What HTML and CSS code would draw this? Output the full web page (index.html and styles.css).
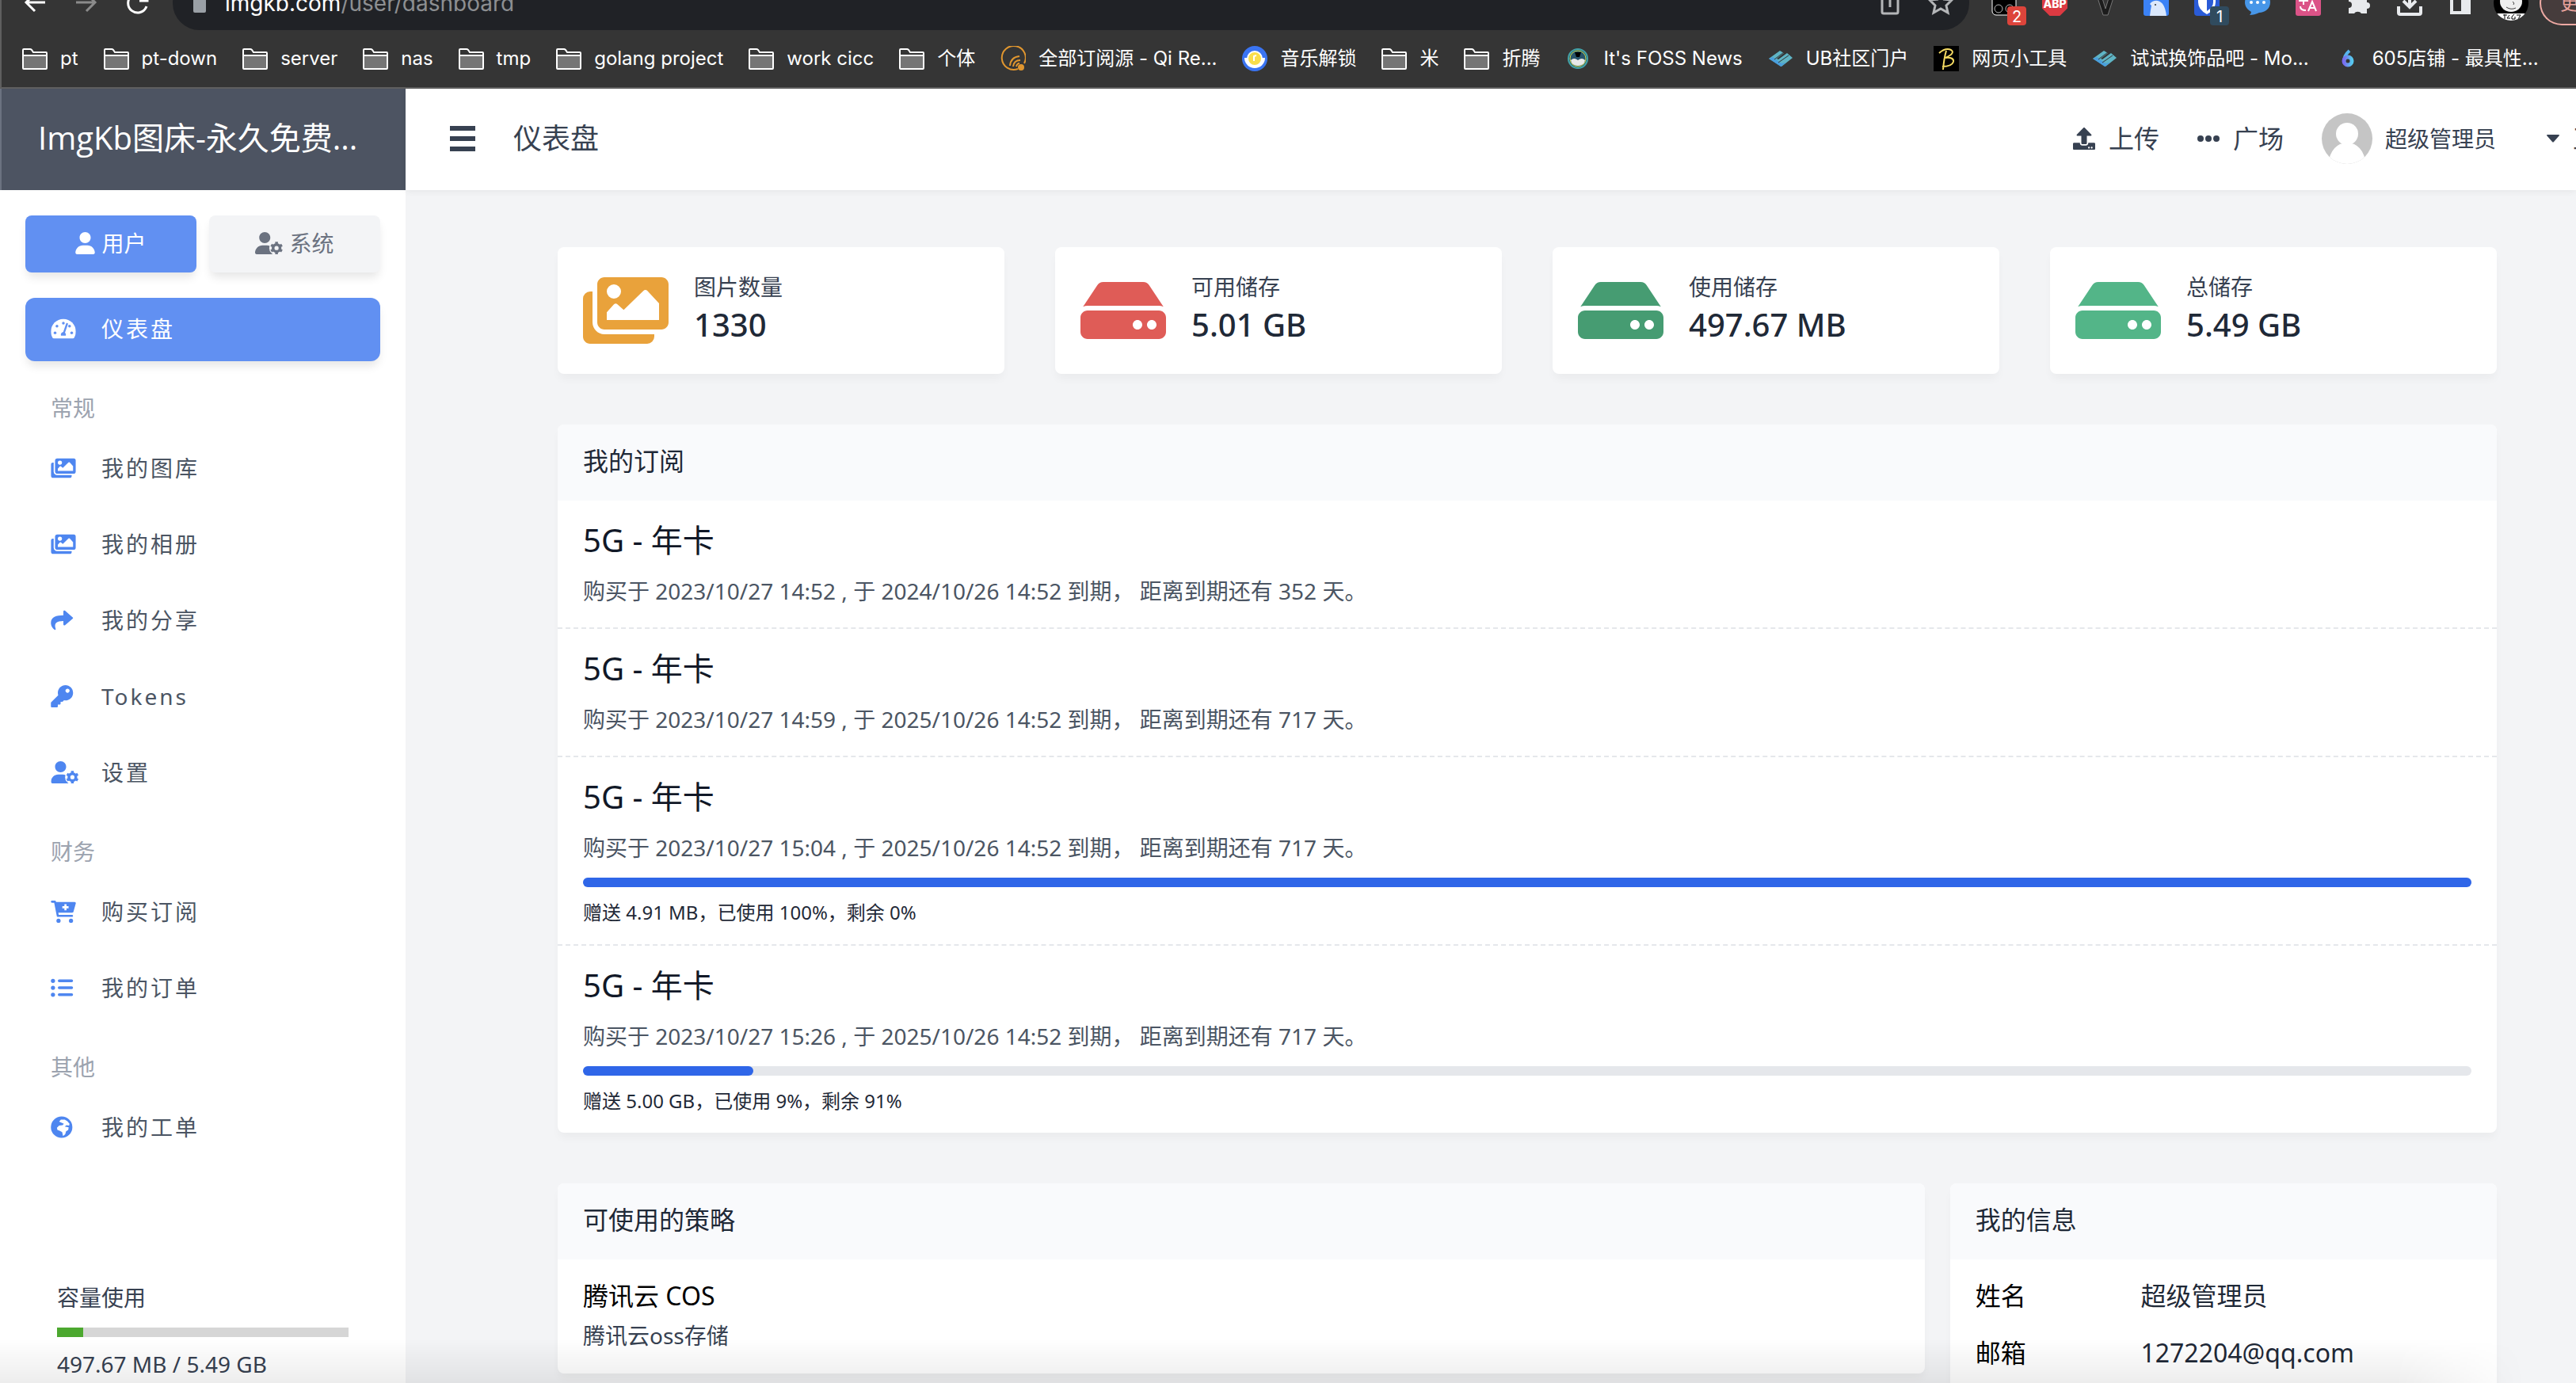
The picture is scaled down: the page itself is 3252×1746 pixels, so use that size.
FILE: index.html
```html
<!DOCTYPE html>
<html lang="zh-CN">
<head>
  <meta charset="UTF-8">
  <title>仪表盘 - ImgKb图床</title>
  <link rel="stylesheet" href="styles.css">
</head>
<body>

<!-- icons used more than once -->
<svg class="sprite" aria-hidden="true">
  <symbol id="folder" viewBox="0 0 32 32">
    <path d="M2 12h28v16H2z" fill="#757575"/>
    <path d="M1 28V5q0-1 1-1h8q1 0 2 1l2 3h16q1 0 1 1v19q0 1-1 1H2q-1 0-1-1zM1 12h30" fill="none" stroke="#fff" stroke-width="2"/>
  </symbol>
  <symbol id="layers" viewBox="0 0 32 32">
    <path d="M1 16L15 6l5 3-9 7 2 1L24 9l7 6-14 11z" fill="#5fb4c4"/>
    <path d="M1 16l5-2 4 3 3 2 4 3 6-1-7 5z" fill="#4a9fdc"/>
    <path d="M8 17L20 8M13 21l13-9" stroke="#353535" stroke-width="1"/>
  </symbol>
  <symbol id="images" viewBox="0 0 576 512">
    <path fill-rule="evenodd" d="M144 32h384c26.5 0 48 21.5 48 48v256c0 26.5-21.5 48-48 48H144c-26.5 0-48-21.5-48-48V80c0-26.5 21.5-48 48-48zM208 80a48 48 0 1 0 0 96 48 48 0 1 0 0-96zM160 268v52h352V208l-78-84q-14-14-28 0L274 252l-42-38q-12-10-24 0z"/>
    <path d="M64 128H48a48 48 0 0 0-48 48v256c0 26.500 21.500 48 48 48h384a48 48 0 0 0 48-48v-16H144c-44 0-80-36-80-80z"/>
  </symbol>
  <symbol id="hdd" viewBox="0 0 576 512">
    <path d="M576 304v96c0 26.510-21.490 48-48 48H48c-26.510 0-48-21.490-48-48v-96c0-26.510 21.490-48 48-48h480c26.510 0 48 21.490 48 48zm-48-80a79.557 79.557 0 0 1 30.777 6.165L462.250 85.374A48.003 48.003 0 0 0 422.311 64H153.689a48 48 0 0 0-39.938 21.374L17.223 230.165A79.557 79.557 0 0 1 48 224h480zm-48 96c-17.673 0-32 14.327-32 32s14.327 32 32 32 32-14.327 32-32-14.327-32-32-32zm-96 0c-17.673 0-32 14.327-32 32s14.327 32 32 32 32-14.327 32-32-14.327-32-32-32z"/>
  </symbol>
  <symbol id="user" viewBox="0 0 448 512">
    <path d="M224 256c70.700 0 128-57.310 128-128S294.700 0 224 0 96 57.310 96 128s57.300 128 128 128zM274.700 304H173.300C77.610 304 0 381.600 0 477.300 0 496.440 15.520 512 34.660 512h378.700C432.500 512 448 496.500 448 477.300 448 381.600 370.400 304 274.700 304z"/>
  </symbol>
  <symbol id="user-gear" viewBox="0 0 640 512">
    <mask id="gear-cut"><path d="M0 0h640v512H0z" fill="#fff"/><circle cx="496" cy="368" r="168" fill="#000"/></mask>
    <path mask="url(#gear-cut)" d="M224 256c70.700 0 128-57.310 128-128S294.700 0 224 0 96 57.310 96 128s57.300 128 128 128zM274.700 304H173.300C77.610 304 0 381.600 0 477.300 0 496.440 15.520 512 34.660 512h378.700C432.500 512 448 496.500 448 477.300 448 381.600 370.400 304 274.700 304z"/>
    <g fill="none" stroke="currentColor">
      <circle cx="496" cy="368" r="80" stroke-width="64"/>
      <path stroke-width="64" d="M496 268v-44M496 468v44M583 318l38-22M409 418l-38 22M583 418l38 22M409 318l-38-22"/>
    </g>
  </symbol>
</svg>

<div class="browser">
  <div class="toolbar">
    <svg class="nav-icon" viewBox="0 0 32 32"><path d="M29 15H5M16 4L5 15l11 11" stroke="#fff"/></svg>
    <svg class="nav-icon" viewBox="0 0 32 32"><path d="M3 15h24M16 4l11 11-11 11" stroke="#8b8b8b"/></svg>
    <svg class="nav-icon" viewBox="0 0 32 32"><path d="M27 20a12 12 0 1 1 0-8M28 3v10H18" stroke="#fff"/></svg>
    <div class="address">
      <svg class="lock" viewBox="0 0 16 24"><path d="M0 8h16v14q0 2-2 2H2q-2 0-2-2z" fill="#9aa0a6"/><path d="M4 9V5a4 4 0 0 1 8 0v4" fill="none" stroke="#9aa0a6" stroke-width="2"/></svg>
      <span class="url">imgkb.com<span>/user/dashboard</span></span>
      <svg class="address-icon" viewBox="0 0 32 32"><path d="M11 9H8q-2 0-2 2v16q0 2 2 2h16q2 0 2-2V11q0-2-2-2h-3M16 21V3M11 7l5-5 5 5"/></svg>
      <svg class="address-icon" viewBox="0 0 32 32"><path d="M16 2l4 9 10 1-7 7 2 9-9-5-9 5 2-9-7-7 10-1z"/></svg>
    </div>
    <div class="extensions">
      <div class="ext">
        <svg viewBox="0 0 32 32"><rect x="1" y="1" width="30" height="30" rx="5" fill="#000" stroke="#fff"/><circle cx="9" cy="23" r="5" fill="none" stroke="#bbb"/><circle cx="23" cy="23" r="5" fill="none" stroke="#bbb"/></svg>
        <span class="badge">2</span>
      </div>
      <div class="ext abp">ABP</div>
      <div class="ext"><svg viewBox="0 0 32 32"><path d="M3 0h6l7 23L23 0h6L19 31h-6z" fill="#1c1c1c" stroke="#777"/></svg></div>
      <div class="ext"><svg viewBox="0 0 32 32"><rect width="32" height="32" rx="3" fill="#3b82f6"/><path d="M8 32q1-8 2-13l-2-2q4-5 10-4 9 2 11 19z" fill="#dbe8fc"/><circle cx="15" cy="18" r="1" fill="#333"/></svg></div>
      <div class="ext">
        <svg viewBox="0 0 32 32"><rect width="32" height="32" rx="4" fill="#2a5bd7"/><path d="M5 3h22v12q0 9-11 15Q5 24 5 15z" fill="#fff"/><path d="M16 6h8v9q0 6-8 11z" fill="#2a5bd7"/></svg>
        <span class="badge navy">1</span>
      </div>
      <div class="ext"><svg viewBox="0 0 32 32"><path d="M16 1c9 0 16 6 16 14s-7 13-14 13c-4 2-8 3-12 3q2-2 2-4C3 24 0 20 0 15 0 7 7 1 16 1z" fill="#4796e8"/><g fill="#fff"><circle cx="8" cy="15" r="2"/><circle cx="16" cy="15" r="2"/><circle cx="24" cy="15" r="2"/></g></svg></div>
      <div class="ext"><svg viewBox="0 0 32 32"><rect width="32" height="32" rx="3" fill="#db5387"/><path d="M16 26l5-12 5 12M18 22h6M6 20q0 5 7 5M10 4v14M5 7h10v6H5z" fill="none" stroke="#fff" stroke-width="2"/></svg></div>
      <div class="ext"><svg viewBox="0 0 32 32"><path d="M3 8h8a4 4 0 1 1 8 0h7v7a4 4 0 1 1 0 8v6h-7a5 4 0 0 0-9 0H3v-7a4 4 0 0 0 0-8z" fill="#e8eaed"/></svg></div>
      <div class="ext"><svg viewBox="0 0 32 32"><path d="M2 20v8q0 2 2 2h24q2 0 2-2v-8M16 2v18M8 13l8 8 8-8" fill="none" stroke="#e8eaed" stroke-width="4"/></svg></div>
      <div class="ext"><svg viewBox="0 0 32 32"><path d="M3 3h26v27H3z" fill="#e8eaed"/><path d="M7 7h10v19H7z" fill="#353535"/></svg></div>
    </div>
    <svg class="profile" viewBox="0 0 44 44"><clipPath id="face"><circle cx="22" cy="22" r="22"/></clipPath><g clip-path="url(#face)"><path d="M0 0h44v44H0z" fill="#000"/><ellipse cx="22" cy="20" rx="14" ry="13" fill="#eee"/><path d="M16 27q6 4 12 1M24 20q3 2 1 4" fill="none" stroke="#444" stroke-width="1"/><path d="M0 35h44v9H0z" fill="#fff"/><path d="M12 37h5M14 36v6M20 37l-3 4h4M26 36l-3 3v3h4v-3M29 37h5l-3 5" fill="none" stroke="#000"/></g></svg>
    <button class="update">更新</button>
  </div>
  <nav class="bookmarks">
    <a href="#"><svg><use href="#folder"/></svg>pt</a>
    <a href="#"><svg><use href="#folder"/></svg>pt-down</a>
    <a href="#"><svg><use href="#folder"/></svg>server</a>
    <a href="#"><svg><use href="#folder"/></svg>nas</a>
    <a href="#"><svg><use href="#folder"/></svg>tmp</a>
    <a href="#"><svg><use href="#folder"/></svg>golang project</a>
    <a href="#"><svg><use href="#folder"/></svg>work cicc</a>
    <a href="#"><svg><use href="#folder"/></svg>个体</a>
    <a href="#"><svg viewBox="0 0 32 32"><g fill="none" stroke="#e0962f" stroke-width="2"><path d="M22 29a15 15 0 1 1 8-7"/><path d="M12 25q1-11 12-12M16 26q1-8 9-8M20 26q1-4 4-4"/></g><circle cx="26" cy="27" r="4" fill="#e0962f"/></svg>全部订阅源 - Qi Re...</a>
    <a href="#"><svg viewBox="0 0 32 32"><circle cx="16" cy="16" r="16" fill="#3a74f2"/><path d="M3 15h26a13 13 0 0 1-26 0z" fill="#fff"/><circle cx="16" cy="16" r="9" fill="#f9de4b" stroke="#fff" stroke-width="2"/><path d="M15 19v-6l3-1" fill="none" stroke="#fff" stroke-width="2"/></svg>音乐解锁</a>
    <a href="#"><svg><use href="#folder"/></svg>米</a>
    <a href="#"><svg><use href="#folder"/></svg>折腾</a>
    <a href="#"><svg viewBox="0 0 32 32"><circle cx="16" cy="16" r="12" fill="#28546b" stroke="#43a3a8" stroke-width="2"/><circle cx="16" cy="16" r="10" fill="none" stroke="#c8d94a" stroke-width="1"/><path d="M12 8h8l-2 6h-4z" fill="#000"/><path d="M7 18q4-4 9 0 5-4 9 0-1 7-9 7t-9-7z" fill="#e8e8e8"/></svg>It's FOSS News</a>
    <a href="#"><svg><use href="#layers"/></svg>UB社区门户</a>
    <a href="#"><svg viewBox="0 0 32 32"><path d="M0 0h32v32H0z" fill="#000"/><path d="M7 9q8-7 15-4 6 4-7 10 11-1 10 5-2 6-14 6M16 6q-3 10-4 24" fill="none" stroke="#f6dc63" stroke-width="2"/></svg>网页小工具</a>
    <a href="#"><svg><use href="#layers"/></svg>试试换饰品吧 - Mo...</a>
    <a href="#"><svg viewBox="0 0 32 32"><defs><linearGradient id="six"><stop offset="0" stop-color="#7a6bf0"/><stop offset="1" stop-color="#56c8ee"/></linearGradient></defs><path d="M19 6q-7 6-7 14" fill="none" stroke="#56b4ee" stroke-width="4"/><circle cx="17" cy="19" r="5" fill="none" stroke="url(#six)" stroke-width="5"/></svg>605店铺 - 最具性...</a>
  </nav>
</div>

<div class="app">
  <aside class="sidebar">
    <div class="brand">ImgKb图床-永久免费...</div>
    <div class="tabs">
      <button class="tab active"><svg class="icon-user"><use href="#user"/></svg>用户</button>
      <button class="tab"><svg class="icon-gear"><use href="#user-gear"/></svg>系统</button>
    </div>
    <nav class="menu">
      <a class="active" href="#">
        <svg viewBox="0 0 576 512"><mask id="dial"><path fill="#fff" d="M0 0h576v512H0z"/><g fill="#000"><circle cx="96" cy="352" r="32"/><circle cx="140" cy="196" r="32"/><circle cx="288" cy="128" r="32"/><circle cx="430" cy="196" r="32"/><circle cx="480" cy="352" r="32"/><path d="M372 146l-66 190" stroke="#000" stroke-width="44" stroke-linecap="round"/><path d="M232 416q-16-70 56-88 72 18 56 88z"/></g></mask><path mask="url(#dial)" d="M288 32C129 32 0 161 0 320c0 53 14 102 39 145 6 10 16 15 27 15h444c11 0 21-5 27-15 25-43 39-92 39-145C576 161 447 32 288 32z"/></svg>
        仪表盘
      </a>
      <h3>常规</h3>
      <a href="#"><svg viewBox="0 0 576 512"><use href="#images"/></svg>我的图库</a>
      <a href="#"><svg viewBox="0 0 576 512"><use href="#images"/></svg>我的相册</a>
      <a href="#"><svg viewBox="0 0 576 512"><path d="M503.700 189.800l-176-151.100C312.300 25.400 288 36.100 288 56v87.900C127.400 146.200 0 179.700 0 322.300c0 61.400 39.600 122.300 83.300 154.100 13.700 9.900 33.100-2.500 28.100-18.600C66.100 312.800 132.900 274.300 288 272v80c0 20 24.400 30.500 39.700 17.300l176-152c11.100-9.400 11.100-20 0-27.500z"/></svg>我的分享</a>
      <a href="#"><svg viewBox="0 0 576 512"><path d="M512 176.001C512 273.203 433.202 352 336 352c-11.220 0-22.190-1.062-32.827-3.069l-24.012 27.014A23.999 23.999 0 0 1 261.223 384H224v40c0 13.255-10.745 24-24 24h-40v40c0 13.255-10.745 24-24 24H24c-13.255 0-24-10.745-24-24v-78.059c0-6.365 2.529-12.470 7.029-16.971l161.802-161.802C163.108 213.814 160 195.271 160 176 160 78.798 238.797 0 336 0c97.488 0 176 78.511 176 176.001zM336 128c0 26.510 21.490 48 48 48s48-21.490 48-48-21.490-48-48-48-48 21.490-48 48z"/></svg>Tokens</a>
      <a href="#"><svg viewBox="0 0 576 512"><use href="#user-gear" width="640" height="512"/></svg>设置</a>
      <h3>财务</h3>
      <a href="#"><svg viewBox="0 0 576 512"><path fill-rule="evenodd" d="M24 0h68c12 0 21 8 24 19l3 13h429c18 0 32 16 27 34l-54 192c-4 14-17 22-31 22H171l9 48h308c13 0 24 11 24 24s-11 24-24 24H160c-12 0-22-8-24-20L76 48H24C11 48 0 37 0 24S11 0 24 0zm288 80v48h-48v48h48v48h48v-48h48v-48h-48V80z"/><circle cx="176" cy="464" r="48"/><circle cx="464" cy="464" r="48"/></svg>购买订阅</a>
      <a href="#"><svg viewBox="0 0 576 512"><circle cx="48" cy="96" r="48"/><circle cx="48" cy="256" r="48"/><circle cx="48" cy="416" r="48"/><path d="M192 64h288a32 32 0 0 1 0 64H192a32 32 0 0 1 0-64zM192 224h288a32 32 0 0 1 0 64H192a32 32 0 0 1 0-64zM192 384h288a32 32 0 0 1 0 64H192a32 32 0 0 1 0-64z"/></svg>我的订单</a>
      <h3>其他</h3>
      <a href="#"><svg viewBox="0 0 576 512"><path fill-rule="evenodd" d="M248 8a248 248 0 1 0 0 496 248 248 0 1 0 0-496zM190 130l40-50h90l60 40 50 60-10 40-60-10-40 30 90 20-10 60-50 30-20 70-50 40-20-90-60-30-50-20-10-50 50-50 80-10 30-30z"/></svg>我的工单</a>
    </nav>
    <div class="capacity">
      <p>容量使用</p>
      <div class="meter"><div style="width: 9%"></div></div>
      <p>497.67 MB / 5.49 GB</p>
    </div>
  </aside>

  <div class="page">
    <header class="topbar">
      <svg class="bars" viewBox="0 0 36 36"><path d="M2 2h32v6H2zM2 15h32v6H2zM2 28h32v6H2z"/></svg>
      <h1>仪表盘</h1>
      <a href="#"><svg class="upload" viewBox="0 0 512 512"><path d="M296 384h-80c-13.300 0-24-10.700-24-24V192h-87.700c-17.800 0-26.700-21.500-14.100-34.100L242.300 5.700c7.500-7.500 19.800-7.500 27.300 0l152.200 152.200c12.600 12.600 3.700 34.100-14.100 34.100H320v168c0 13.300-10.700 24-24 24zm216-8v112c0 13.300-10.700 24-24 24H24c-13.300 0-24-10.700-24-24V376c0-13.300 10.700-24 24-24h136v8c0 30.900 25.100 56 56 56h80c30.900 0 56-25.100 56-56v-8h136c13.300 0 24 10.700 24 24zm-124 88c0-11-9-20-20-20s-20 9-20 20 9 20 20 20 20-9 20-20zm64 0c0-11-9-20-20-20s-20 9-20 20 9 20 20 20 20-9 20-20z"/></svg>上传</a>
      <a href="#"><svg class="dots" viewBox="0 0 28 28"><circle cx="4" cy="14" r="4"/><circle cx="14" cy="14" r="4"/><circle cx="24" cy="14" r="4"/></svg>广场</a>
      <a class="account" href="#"><svg viewBox="0 0 64 64"><clipPath id="round"><circle cx="32" cy="32" r="32"/></clipPath><g clip-path="url(#round)"><path d="M0 0h64v64H0z" fill="#c5c5c5"/><circle cx="32" cy="26" r="14" fill="#fff"/><path d="M8 64q4-26 24-27 20 1 24 27z" fill="#fff"/></g></svg>超级管理员</a>
      <button class="lang"><svg viewBox="0 0 16 10"><path d="M1 0h14q1 0 1 1L9 9q-1 1-2 0L0 1q0-1 1-1z"/></svg><span>正體</span></button>
    </header>

    <main class="content">
      <div class="stats">
        <div class="stat">
          <svg class="orange" viewBox="0 0 576 512"><use href="#images"/></svg>
          <div><p>图片数量</p><strong>1330</strong></div>
        </div>
        <div class="stat">
          <svg class="red" viewBox="0 0 576 512"><use href="#hdd"/></svg>
          <div><p>可用储存</p><strong>5.01 GB</strong></div>
        </div>
        <div class="stat">
          <svg class="green" viewBox="0 0 576 512"><use href="#hdd"/></svg>
          <div><p>使用储存</p><strong>497.67 MB</strong></div>
        </div>
        <div class="stat">
          <svg class="mint" viewBox="0 0 576 512"><use href="#hdd"/></svg>
          <div><p>总储存</p><strong>5.49 GB</strong></div>
        </div>
      </div>

      <section class="panel">
        <h2>我的订阅</h2>
        <div class="plan">
          <h4>5G - 年卡</h4>
          <p>购买于 2023/10/27 14:52 , 于 2024/10/26 14:52 到期， 距离到期还有 352 天。</p>
        </div>
        <div class="plan">
          <h4>5G - 年卡</h4>
          <p>购买于 2023/10/27 14:59 , 于 2025/10/26 14:52 到期， 距离到期还有 717 天。</p>
        </div>
        <div class="plan">
          <h4>5G - 年卡</h4>
          <p>购买于 2023/10/27 15:04 , 于 2025/10/26 14:52 到期， 距离到期还有 717 天。</p>
          <div class="progress"><div style="width: 100%"></div></div>
          <small>赠送 4.91 MB，已使用 100%，剩余 0%</small>
        </div>
        <div class="plan">
          <h4>5G - 年卡</h4>
          <p>购买于 2023/10/27 15:26 , 于 2025/10/26 14:52 到期， 距离到期还有 717 天。</p>
          <div class="progress"><div style="width: 9%"></div></div>
          <small>赠送 5.00 GB，已使用 9%，剩余 91%</small>
        </div>
      </section>

      <div class="columns">
        <section class="panel">
          <h2>可使用的策略</h2>
          <div class="strategy">
            <h4>腾讯云 COS</h4>
            <p>腾讯云oss存储</p>
          </div>
        </section>
        <section class="panel">
          <h2>我的信息</h2>
          <dl class="info">
            <dt>姓名</dt><dd>超级管理员</dd>
            <dt>邮箱</dt><dd>1272204@qq.com</dd>
          </dl>
        </section>
      </div>
    </main>
  </div>
</div>

</body>
</html>
```
FILE: styles.css
```css
* {
  box-sizing: border-box;
}
body {
  margin: 0;
  height: 100vh;
  overflow: hidden;
  display: flex;
  flex-direction: column;
  background: #f3f4f6;
  color: #1f2937;
  font-family: "Noto Sans", "Noto Sans CJK SC", sans-serif;
  font-size: 28px;
  line-height: 40px;
}
/* dock shadow along the bottom edge */
body::after {
  content: "";
  position: fixed;
  left: 0;
  right: 0;
  bottom: 0;
  height: 56px;
  background: linear-gradient(rgba(0,0,0,0), rgba(0,0,0,0.07));
  mask-image: linear-gradient(to right, #000 93%, transparent 98%);
  pointer-events: none;
}
h1, h2, h3, h4, p, dl, dd {
  margin: 0;
  font-weight: 400;
}
a {
  color: inherit;
  text-decoration: none;
}
button {
  border: 0;
  padding: 0;
  background: none;
  color: inherit;
  font: inherit;
}
svg {
  flex: none;
  fill: currentColor;
}
.sprite {
  position: absolute;
  width: 0;
  height: 0;
}

/* browser */
.browser {
  flex: none;
  overflow: hidden;
  background: #353535;
  border-bottom: 2px solid #5f5f5f;
  box-shadow: inset 2px 0 #5f5f5f;
  color: #fff;
  font-family: Inter, "Noto Sans CJK SC", sans-serif;
}
.toolbar {
  display: flex;
  align-items: center;
  height: 68px;
  margin-top: -30px;
  padding-left: 28px;
}
.nav-icon {
  width: 32px;
  height: 32px;
  margin-right: 33px;
  fill: none;
  stroke-width: 3;
}
.address {
  flex: 1;
  display: flex;
  align-items: center;
  height: 68px;
  margin-left: -5px;
  padding: 0 20px 0 26px;
  border-radius: 34px;
  background: #202226;
}
.lock {
  width: 16px;
  height: 24px;
  margin-right: 24px;
}
.url {
  flex: 1;
}
.url span {
  color: #8d8f92;
}
.address-icon {
  width: 32px;
  height: 32px;
  margin-left: 32px;
  fill: none;
  stroke: #b4b6b8;
  stroke-width: 3;
}
.extensions {
  display: flex;
  gap: 32px;
  padding: 0 26px 0 28px;
}
.ext {
  position: relative;
  width: 32px;
  height: 32px;
}
.ext svg {
  display: block;
  width: 32px;
  height: 32px;
}
.abp {
  background: #dc3a42;
  clip-path: polygon(30% 0, 70% 0, 100% 30%, 100% 70%, 70% 100%, 30% 100%, 0 70%, 0 30%);
  font-size: 14px;
  font-weight: 800;
  line-height: 34px;
  text-align: center;
}
.badge {
  position: absolute;
  left: 20px;
  top: 20px;
  width: 24px;
  height: 24px;
  border-radius: 4px;
  background: #dd443b;
  font-size: 20px;
  line-height: 26px;
  text-align: center;
}
.badge.navy {
  background: #304b5e;
}
.profile {
  width: 44px;
  height: 44px;
  margin-right: 14px;
}
.update {
  width: 46px;
  height: 56px;
  padding-left: 24px;
  overflow: hidden;
  border: 2px solid #eda9a3;
  border-right: 0;
  border-radius: 28px 0 0 28px;
  background: #463c3c;
  color: #e9a29c;
  font-size: 24px;
  text-align: left;
  white-space: nowrap;
}
.bookmarks {
  display: flex;
  align-items: center;
  gap: 32px;
  height: 72px;
  padding-left: 28px;
  font-size: 24px;
  white-space: nowrap;
}
.bookmarks a {
  display: flex;
  align-items: center;
  gap: 16px;
}
.bookmarks svg {
  width: 32px;
  height: 32px;
}

.app {
  flex: 1;
  min-height: 0;
  display: flex;
}

/* sidebar */
.sidebar {
  flex: none;
  width: 512px;
  display: flex;
  flex-direction: column;
  background: #fff;
}
.brand {
  flex: none;
  height: 128px;
  padding: 0 48px;
  background: #4d5462;
  box-shadow: inset 2px 0 #6b7280;
  color: #fff;
  font-family: "Open Sans", "Noto Sans CJK SC", sans-serif;
  font-size: 40px;
  line-height: 124px;
  white-space: nowrap;
}
.tabs {
  display: flex;
  gap: 16px;
  padding: 32px;
}
.tab {
  flex: 1;
  display: flex;
  align-items: center;
  justify-content: center;
  gap: 8px;
  height: 72px;
  padding-bottom: 2px;
  border-radius: 8px;
  background: #f3f4f6;
  box-shadow: 0 8px 12px -2px rgba(0,0,0,0.1);
  color: #6b7280;
}
.tab.active, .menu .active {
  background: #6190f2;
  color: #fff;
}
.icon-user {
  width: 25px;
  height: 28px;
}
.icon-gear {
  width: 35px;
  height: 28px;
}
.menu {
  padding: 0 32px;
}
.menu a {
  display: flex;
  align-items: center;
  gap: 32px;
  height: 80px;
  margin-bottom: 16px;
  padding: 0 32px 2px;
  border-radius: 12px;
  color: #4b5563;
  letter-spacing: 3px;
}
.menu .active {
  box-shadow: 0 8px 12px -2px rgba(0,0,0,0.1);
}
.menu svg {
  width: 32px;
  height: 28px;
  overflow: visible;
  color: #4e86f0;
}
.menu .active svg {
  color: #fff;
}
.menu h3 {
  height: 80px;
  padding: 23px 32px 0;
  color: #9ca3af;
  font-size: 28px;
}
.capacity {
  margin-top: auto;
  padding: 0 72px 4px;
  color: #374151;
}
.meter {
  height: 12px;
  margin: 18px 0 14px;
  background: #d6d6d6;
}
.meter div {
  height: 100%;
  background: #4ca82f;
}

/* top bar */
.page {
  flex: 1;
  min-width: 0;
}
.topbar {
  position: relative;
  display: flex;
  align-items: center;
  height: 128px;
  padding: 0 0 2px 54px;
  overflow: hidden;
  background: #fff;
  box-shadow: 0 2px 8px rgba(0,0,0,0.06);
  color: #374151;
  font-size: 32px;
  white-space: nowrap;
}
.bars {
  width: 36px;
  height: 36px;
  margin-right: 46px;
}
.topbar h1 {
  flex: 1;
  font-size: 36px;
}
.topbar a {
  display: flex;
  align-items: center;
  gap: 17px;
  margin-right: 48px;
}
.upload, .dots {
  width: 28px;
  height: 28px;
}
.topbar .account {
  gap: 16px;
  margin-right: 64px;
  font-size: 28px;
}
.account svg {
  width: 64px;
  height: 64px;
}
.lang {
  display: flex;
  align-items: center;
  gap: 17px;
}
.lang svg {
  width: 16px;
  height: 10px;
}
.lang span {
  width: 4px;
  overflow: hidden;
  text-align: left;
}

/* dashboard */
.content {
  display: flex;
  flex-direction: column;
  gap: 64px;
  padding: 72px 100px 0 192px;
}
.stats {
  display: grid;
  grid-template-columns: repeat(4, 1fr);
  gap: 64px;
}
.stat, .panel {
  border-radius: 8px;
  background: #fff;
  box-shadow: 0 8px 12px -2px rgba(0,0,0,0.04);
}
.stat {
  display: flex;
  gap: 32px;
  height: 160px;
  padding: 30px 32px;
}
.stat svg {
  width: 108px;
  height: 100px;
}
.stat p {
  color: #374151;
}
.stat strong {
  display: block;
  font-size: 40px;
  font-weight: 500;
  line-height: 56px;
}
.orange {
  color: #e9a23b;
}
.red {
  color: #df5c57;
}
.green {
  color: #469c72;
}
.mint {
  color: #53b588;
}
.panel {
  overflow: hidden;
}
.panel h2 {
  height: 96px;
  padding: 0 32px;
  background: #f9fafc;
  font-size: 32px;
  line-height: 92px;
}
.plan {
  padding: 22px 32px 24px;
}
.plan + .plan {
  border-top: 2px dashed #e5e7eb;
}
.plan h4 {
  margin-bottom: 16px;
  color: #111827;
  font-size: 40px;
  line-height: 56px;
}
.plan p {
  margin-bottom: 2px;
  color: #4b5563;
}
.plan small {
  display: block;
  font-size: 24px;
  line-height: 32px;
}
.progress {
  height: 12px;
  margin: 16px 0;
  border-radius: 6px;
  background: #e5e7eb;
}
.plan p + .progress {
  margin-top: 18px;
}
.progress div {
  height: 100%;
  border-radius: 6px;
  background: #2f66e8;
}
.columns {
  display: grid;
  grid-template-columns: 5fr 2fr;
  align-items: start;
  gap: 32px;
}
.strategy {
  padding: 22px 32px 28px;
}
.strategy h4 {
  margin-bottom: 6px;
  color: #000;
  font-size: 32px;
  line-height: 48px;
}
.strategy p {
  color: #374151;
}
.info {
  display: grid;
  grid-template-columns: 1fr 2fr;
  gap: 24px 0;
  padding: 22px 32px 26px;
  font-size: 32px;
  line-height: 48px;
}
.info dt {
  color: #000;
}
```
